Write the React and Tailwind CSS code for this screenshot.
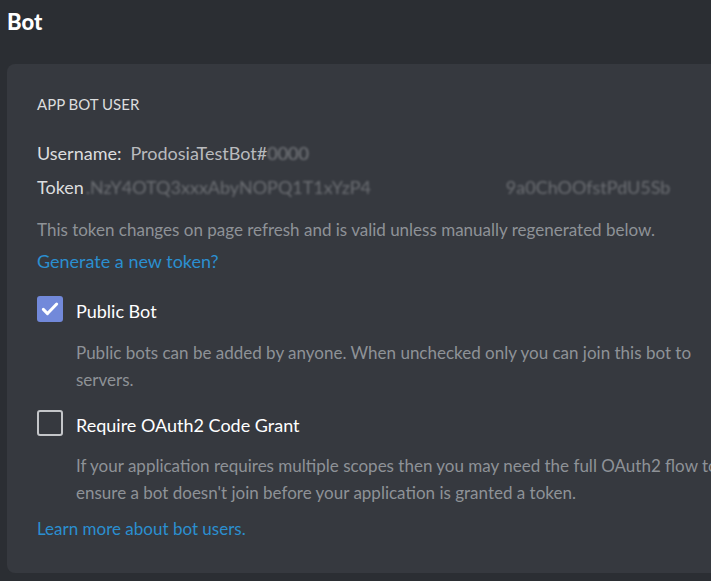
export default function App() {
  return (
    <div
      className="h-[581px] w-[711px] overflow-hidden bg-[#2b2e33] text-[#dcddde]"
      style={{ fontFamily: "Lato, 'Noto Sans', sans-serif" }}
    >
      <h1 className="px-[7px] pt-[8px] text-[22px] font-black leading-[28px] text-white">Bot</h1>

      <div className="ml-[7px] mt-[28px] rounded-l-[8px] bg-[#36393f] pb-[32px] pl-[30px] pr-4 pt-[30px]">
        <h2 className="text-[15px] uppercase leading-[20px] text-[#dcddde]">App Bot User</h2>

        <div className="mt-[27px] flex text-[18px] leading-[24px]">
          <span className="text-[#dcddde]">Username:</span>
          <span className="ml-[9px] text-[#b9bbbe]">ProdosiaTestBot#</span>
          <span className="blur-[1px] text-[#b9bbbe] opacity-50">0000</span>
        </div>

        <div className="mt-[10px] flex text-[18px] leading-[24px]">
          <span className="text-[#dcddde]">Token</span>
          <span className="ml-[2px] w-[292px] truncate blur-[1px] text-[#b9bbbe] opacity-40">
            .NzY4OTQ3xxxAbyNOPQ1T1xYzP4
          </span>
          <span className="ml-[128px] blur-[1px] text-[#b9bbbe] opacity-40">9a0ChOOfstPdU5Sb</span>
        </div>

        <p className="mt-[19px] text-[17px] leading-[24px] text-[#8e9297]">
          This token changes on page refresh and is valid unless manually regenerated below.
        </p>
        <a className="mt-[7px] block text-[18px] leading-[24px] text-[#2b8fd0]">Generate a new token?</a>

        <label className="mt-[23px] flex h-[26px] items-center gap-[13px]">
          <span className="flex h-[26px] w-[26px] items-center justify-center rounded-[3px] bg-[#7289da]">
            <svg width="20" height="20" viewBox="0 0 24 24" fill="none">
              <path d="M4 12.5l5 5L20 6" stroke="white" strokeWidth="3.6" strokeLinecap="round" strokeLinejoin="round" />
            </svg>
          </span>
          <span className="pt-[4px] text-[18px] text-white">Public Bot</span>
        </label>
        <p className="ml-[39px] mt-[17px] w-[635px] text-[17px] leading-[27px] text-[#8e9297]">
          Public bots can be added by anyone. When unchecked only you can join this bot to servers.
        </p>

        <label className="mt-[17px] flex h-[26px] items-center gap-[13px]">
          <span className="h-[26px] w-[26px] rounded-[3px] border-2 border-[#c4c6c9]" />
          <span className="whitespace-nowrap pt-[4px] text-[18px] text-white">Require OAuth2 Code Grant</span>
        </label>
        <p className="ml-[39px] mt-[16px] w-[660px] text-[17px] leading-[27px] text-[#8e9297]">
          If your application requires multiple scopes then you may need the full OAuth2 flow to ensure a bot doesn't
          join before your application is granted a token.
        </p>

        <a className="mt-[11px] block text-[17px] leading-[24px] text-[#2b8fd0]">Learn more about bot users.</a>
      </div>
    </div>
  );
}
